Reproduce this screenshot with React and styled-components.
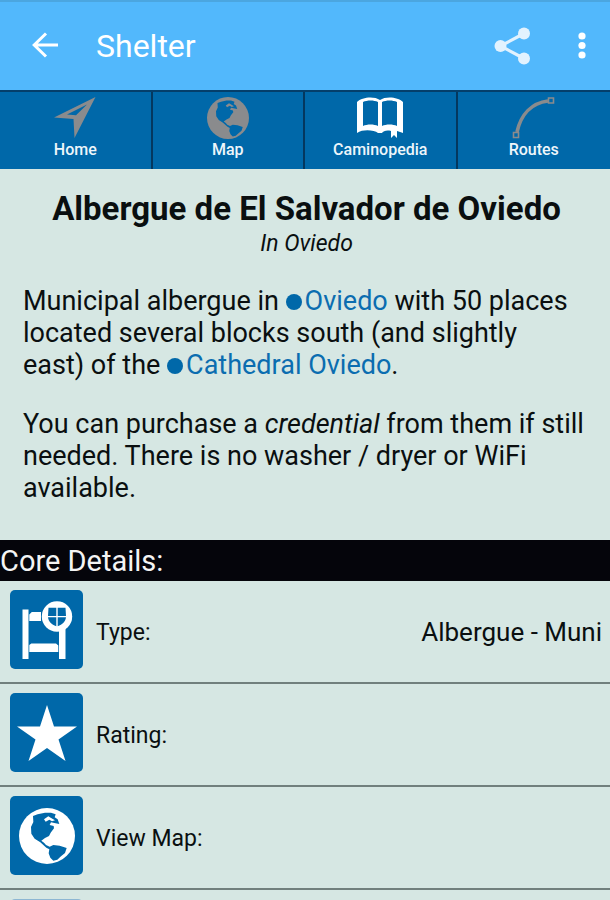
import styled, { createGlobalStyle } from "styled-components";

const GlobalStyle = createGlobalStyle`
  * {
    box-sizing: border-box;
  }
  body {
    margin: 0;
    background: #d6e7e3;
    color: #0a0f10;
    font-family: Roboto, "Noto Sans", sans-serif;
  }
`;

const Screen = styled.div`
  display: flex;
  flex-direction: column;
  height: 100vh;
`;

const AppBar = styled.header`
  display: flex;
  align-items: center;
  flex: none;
  height: 90px;
  padding: 0 12px 0 29px;
  border-top: 2px solid #4ba6e0;
  background: #52b8fc;
  color: #fff;
`;
const AppTitle = styled.h1`
  flex: 1;
  margin: 0 0 0 35px;
  font-size: 32px;
  font-weight: 400;
  line-height: 40px;
`;
const IconButton = styled.button`
  display: flex;
  align-items: center;
  justify-content: center;
  width: ${({ $width }) => $width}px;
  height: 48px;
  padding: 0;
  border: 0;
  background: none;
  color: inherit;
  cursor: pointer;
`;

const TabBar = styled.nav`
  display: grid;
  grid-template-columns: repeat(4, 1fr);
  flex: none;
  height: 79px;
  border-top: 2px solid #043f6b;
  background: #0068a9;
`;
const Tab = styled.a`
  display: flex;
  flex-direction: column;
  align-items: center;
  padding-top: 5px;
  border-right: 2px solid #04385f;
  color: ${({ $active }) => ($active ? "#fff" : "#8a8b8d")};
  text-decoration: none;
  &:last-child {
    border-right: 0;
  }
`;
const TabLabel = styled.span`
  color: #eef6fb;
  font-size: 16px;
  font-weight: 500;
  line-height: 22px;
`;

const Content = styled.main`
  flex: 1;
  min-height: 0;
  overflow-y: auto;
  scrollbar-width: none;
`;
const Intro = styled.article`
  padding: 19px 20px 36px 23px;
`;
const ShelterName = styled.h2`
  margin: 0;
  font-size: 33px;
  font-weight: 700;
  line-height: 42px;
  text-align: center;
`;
const Location = styled.p`
  margin: 0;
  font-size: 23px;
  font-style: italic;
  line-height: 28px;
  text-align: center;
`;
const Paragraph = styled.p`
  margin: 27px 0 0;
  font-size: 27px;
  line-height: 32px;
`;
const PlaceLink = styled.a`
  color: #0b6db0;
  text-decoration: none;
  &::before {
    content: "";
    display: inline-block;
    width: 16px;
    height: 16px;
    margin-right: 3px;
    border-radius: 50%;
    background: #0068a9;
  }
`;

const SectionTitle = styled.h3`
  margin: 0;
  height: 41px;
  background: #05050b;
  color: #f4f4f4;
  font-size: 29px;
  font-weight: 400;
  line-height: 42px;
`;
const DetailList = styled.dl`
  margin: 0;
`;
const DetailRow = styled.div`
  display: flex;
  align-items: center;
  height: 103px;
  padding: 0 8px 0 10px;
  border-bottom: 2px solid #71807d;
`;
const DetailIcon = styled.span`
  display: flex;
  align-items: center;
  justify-content: center;
  width: 73px;
  height: 79px;
  margin: 0 13px 4px 0;
  border-radius: 5px;
  background: ${({ $faded }) => ($faded ? "#8db7d3" : "#0068a9")};
  color: #fff;
`;
const DetailLabel = styled.dt`
  flex: 1;
  padding-top: 2px;
  font-size: 23px;
  line-height: 30px;
`;
const DetailValue = styled.dd`
  margin: 0;
  font-size: 26px;
  line-height: 32px;
`;

const BackIcon = () => (
  <svg width="32" height="32" viewBox="0 0 32 32" fill="none" stroke="currentColor" strokeWidth="3">
    <path d="M29 15H5M17 3.500 5.200 15 17 26.500" />
  </svg>
);

const ShareIcon = () => (
  <svg width="36" height="38" viewBox="0 0 36 38" fill="#e2f2fe" stroke="#e2f2fe">
    <path d="M30 6.500 6.500 19 30 31.500" fill="none" strokeWidth="3.200" />
    <g stroke="none">
      <circle cx="30" cy="6.500" r="6" />
      <circle cx="6.500" cy="19" r="6" />
      <circle cx="30" cy="31.500" r="6" />
    </g>
  </svg>
);

const MoreIcon = () => (
  <svg width="8" height="28" viewBox="0 0 8 28" fill="currentColor">
    <circle cx="4" cy="4" r="3.600" />
    <circle cx="4" cy="13.500" r="3.600" />
    <circle cx="4" cy="23" r="3.600" />
  </svg>
);

const ArrowIcon = () => (
  <svg width="42" height="42" viewBox="0 0 42 42" fill="currentColor" fillRule="evenodd">
    <path d="M41.500 0 20.500 41 19.500 22 0 20.500ZM33 7.500 13 17.500 22 18.300Z" />
  </svg>
);

const GlobeIcon = ({ size, land }) => (
  <svg width={size} height={size} viewBox="0 0 168 168">
    <circle cx="84" cy="84" r="84" fill="currentColor" />
    <path
      fill={land}
      d="M42 24 56 19 78 14 96 14 110 19 107 28 116 34 121 48 106 45 96 43 92 51 104 54 105 61 95 74 90 84 78 90 67 98 75 104 81 111 92 116 103 111 122 113 143 120 138 135 126 145 115 155 103 158 94 149 89 136 91 124 82 119 64 103 47 92 37 77 36 57 43 42Z"
    />
    <path fill="currentColor" d="M75 34 88 25 95 29 108 37 99 40 91 35 80 41Z" />
  </svg>
);

const BookIcon = () => (
  <svg width="48" height="42" viewBox="0 0 48 42" fill="currentColor" fillRule="evenodd">
    <path d="M1 5C6 0 18-1 24 3 30-1 42 0 47 5V36C44 35 42 34 41 34V41L38 38 35 41V34C31 33 27 34 26 36H22C18 33 7 32 1 36ZM7 5V29C11 27 18 27 22 29V5C18 3 11 3 7 5ZM26 5V29C30 27 37 27 41 29V5C37 3 30 3 26 5Z" />
  </svg>
);

const RouteIcon = () => (
  <svg width="44" height="42" viewBox="0 0 44 42" fill="none" stroke="currentColor">
    <path d="M5 35C9 17 20 6 36 4" strokeWidth="3.600" />
    <path d="M36.500 1h5v5h-5ZM1.500 35.500h5v5h-5Z" fill="#0068a9" strokeWidth="1.600" />
  </svg>
);

const BedIcon = () => (
  <svg width="52" height="60" viewBox="0 0 52 60" fill="currentColor">
    <path d="M1.500 9.500h6V59h-6ZM38 28h6.500v31H38ZM8.300 45l2-1.500H35l2.300 2V52h-29ZM8.300 14.500l2.500-2.500H20v9H8.300Z" />
    <circle cx="36" cy="16.500" r="15.200" />
    <path
      fill="#0068a9"
      d="M27.500 7.800h7.800V16H27ZM36.700 7.800h7.800L45 16h-8.300ZM27 17.300H35.300V26.300C30.500 24.500 27.500 21.500 27 17.300ZM36.700 17.300H45C44.500 21.500 41.500 24.500 36.700 26.300Z"
    />
  </svg>
);

const StarIcon = () => (
  <svg width="60" height="56" viewBox="0 0 60 56" fill="currentColor">
    <path d="M30 0 37 21.500H60L41.500 34.500 48.500 56 30 43 11.500 56 18.500 34.500 0 21.500H23Z" />
  </svg>
);

const tabs = [
  { label: "Home", icon: <ArrowIcon /> },
  { label: "Map", icon: <GlobeIcon size={42} land="#0068a9" /> },
  { label: "Caminopedia", icon: <BookIcon />, active: true },
  { label: "Routes", icon: <RouteIcon /> },
];

const details = [
  { id: "type", label: "Type:", value: "Albergue - Muni", icon: <BedIcon /> },
  { id: "rating", label: "Rating:", icon: <StarIcon /> },
  { id: "map", label: "View Map:", icon: <GlobeIcon size={56} land="#0068a9" /> },
  { id: "next", faded: true },
];

const App = () => {
  return (
    <Screen>
      <GlobalStyle />
      <AppBar>
        <IconButton $width={32} aria-label="Back">
          <BackIcon />
        </IconButton>
        <AppTitle>Shelter</AppTitle>
        <IconButton $width={108} aria-label="Share">
          <ShareIcon />
        </IconButton>
        <IconButton $width={32} aria-label="More options">
          <MoreIcon />
        </IconButton>
      </AppBar>

      <TabBar>
        {tabs.map(({ label, icon, active }) => (
          <Tab key={label} href="#" $active={active}>
            {icon}
            <TabLabel>{label}</TabLabel>
          </Tab>
        ))}
      </TabBar>

      <Content>
        <Intro>
          <ShelterName>Albergue de El Salvador de Oviedo</ShelterName>
          <Location>In Oviedo</Location>
          <Paragraph>
            Municipal albergue in <PlaceLink href="#">Oviedo</PlaceLink> with 50
            places located several blocks south (and slightly east)&nbsp;of the{" "}
            <PlaceLink href="#">Cathedral Oviedo</PlaceLink>.
          </Paragraph>
          <Paragraph>
            You can purchase a <em>credential</em> from them if still needed.
            There is no washer / dryer or WiFi available.
          </Paragraph>
        </Intro>

        <SectionTitle>Core Details:</SectionTitle>
        <DetailList>
          {details.map(({ id, label, value, icon, faded }) => (
            <DetailRow key={id}>
              <DetailIcon $faded={faded}>{icon}</DetailIcon>
              <DetailLabel>{label}</DetailLabel>
              <DetailValue>{value}</DetailValue>
            </DetailRow>
          ))}
        </DetailList>
      </Content>
    </Screen>
  );
};
export default App;
